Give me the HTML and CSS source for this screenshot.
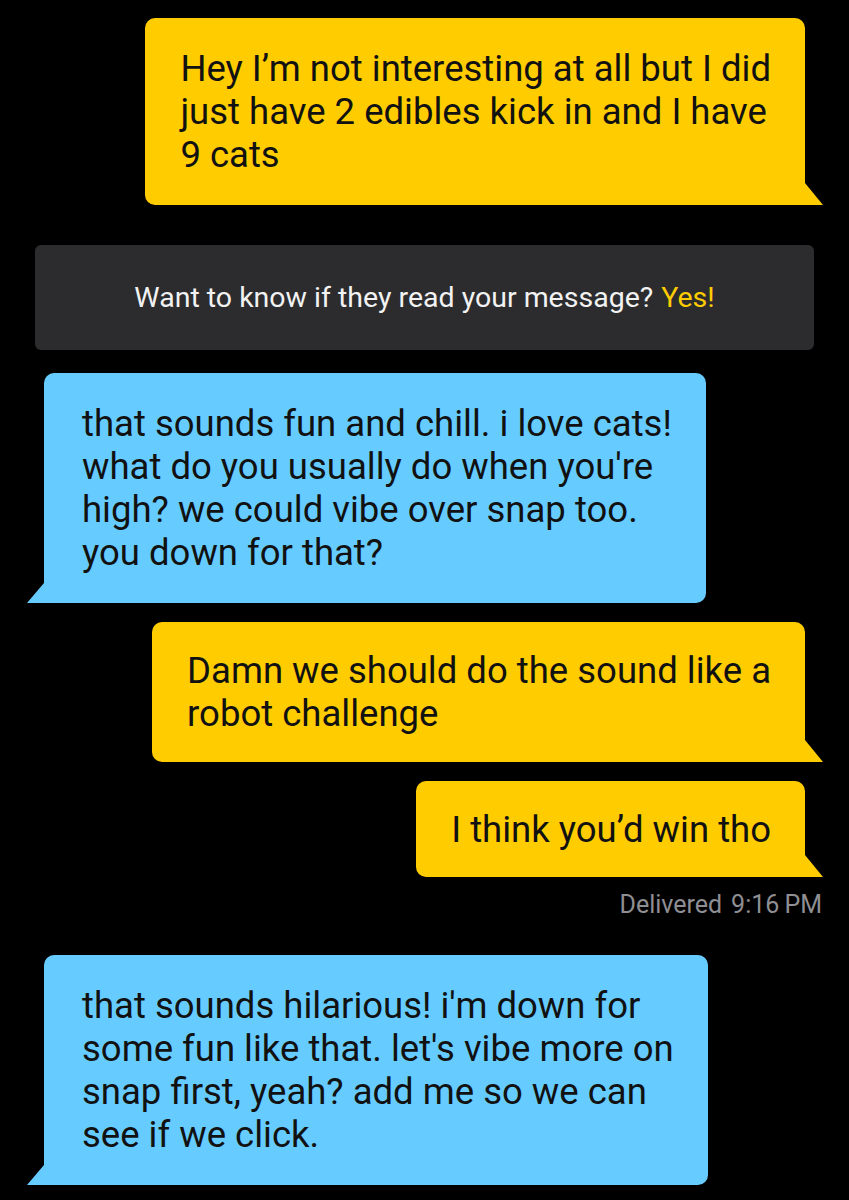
FILE: index.html
```html
<!DOCTYPE html>
<html>
<head>
<meta charset="utf-8">
<link rel="stylesheet" href="styles.css">
</head>
<body>
<div class="chat">
  <div class="bubble out b1">Hey I’m not interesting at all but I did<br>just have 2 edibles kick in and I have<br>9 cats</div>
  <div class="banner">Want to know if they read your message? <span class="yes">Yes!</span></div>
  <div class="bubble in b2">that sounds fun and chill. i love cats!<br>what do you usually do when you're<br>high? we could vibe over snap too.<br>you down for that?</div>
  <div class="bubble out b3">Damn we should do the sound like a<br>robot challenge</div>
  <div class="bubble out b4">I think you’d win tho</div>
  <div class="status">Delivered<span class="time">9:16&#8201;PM</span></div>
  <div class="bubble in b5">that sounds hilarious! i'm down for<br>some fun like that. let's vibe more on<br>snap first, yeah? add me so we can<br>see if we click.</div>
</div>
</body>
</html>
```
FILE: styles.css
```css
html, body {
  margin: 0;
  padding: 0;
  background: #000;
}
body {
  width: 849px;
  height: 1200px;
  overflow: hidden;
  font-family: Roboto, "Noto Sans", sans-serif;
}
.chat {
  display: flex;
  flex-direction: column;
  padding-top: 18px;
}
.bubble {
  position: relative;
  width: fit-content;
  box-sizing: border-box;
  padding: 29px 34px 29px 35px;
  font-size: 36.5px;
  line-height: 43px;
  color: #111;
  white-space: nowrap;
  border-radius: 10px;
}
.bubble::after {
  content: "";
  position: absolute;
  bottom: 0;
  width: 18px;
  height: 22px;
}
.out {
  align-self: flex-end;
  margin-right: 44px;
  background: #ffcc00;
  border-bottom-right-radius: 0;
}
.out::after {
  right: -18px;
  background: #ffcc00;
  clip-path: polygon(0 0, 100% 100%, 0 100%);
}
.in {
  align-self: flex-start;
  margin-left: 44px;
  background: #66ccff;
  border-bottom-left-radius: 0;
  padding-left: 38px;
}
.in::after {
  left: -17px;
  width: 17px;
  height: 20px;
  background: #66ccff;
  clip-path: polygon(100% 0, 100% 100%, 0 100%);
}
.banner {
  margin: 40px 35px 23px;
  height: 105px;
  background: #2c2c2e;
  border-radius: 6px;
  display: flex;
  align-items: center;
  justify-content: center;
  color: #f2f2f2;
  font-size: 28.5px;
}
.yes {
  color: #ffcc00;
  margin-left: 8px;
}
.b3 { margin-top: 19px; padding-top: 27px; padding-bottom: 27px; }
.b4 { margin-top: 19px; padding-top: 27px; padding-bottom: 26px; }
.status {
  align-self: flex-end;
  margin-right: 27px;
  margin-top: 13px;
  color: #8e8e93;
  font-size: 25px;
  line-height: 30px;
}
.time { margin-left: 9px; }
.b5 { margin-top: 35px; }
```
